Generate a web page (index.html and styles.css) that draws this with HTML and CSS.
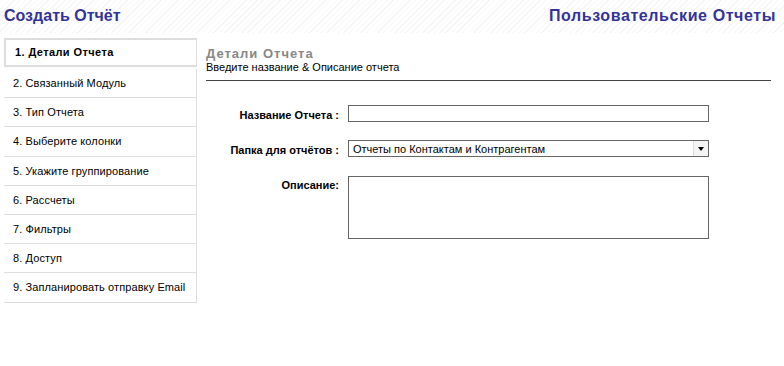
FILE: index.html
```html
<!DOCTYPE html>
<html lang="ru">
<head>
  <meta charset="UTF-8">
  <title>Пользовательские Отчеты</title>
  <link rel="stylesheet" href="styles.css">
</head>
<body>
  <div class="header">
    <h1 class="page-title">Создать Отчёт</h1>
    <h1 class="module-title">Пользовательские Отчеты</h1>
  </div>

  <div class="page">
    <ul class="steps">
      <li class="active">1. Детали Отчета</li>
      <li>2. Связанный Модуль</li>
      <li>3. Тип Отчета</li>
      <li>4. Выберите колонки</li>
      <li>5. Укажите группирование</li>
      <li>6. Рассчеты</li>
      <li>7. Фильтры</li>
      <li>8. Доступ</li>
      <li>9. Запланировать отправку Email</li>
    </ul>

    <div class="main">
      <h2>Детали Отчета</h2>
      <p class="sub">Введите название &amp; Описание отчета</p>

      <div class="form">
        <label for="reportname">Название Отчета :</label>
        <input type="text" id="reportname">

        <label for="folder">Папка для отчётов :</label>
        <div class="select">
          <span>Отчеты по Контактам и Контрагентам</span>
          <span class="arrow"></span>
        </div>

        <label for="descr">Описание:</label>
        <textarea id="descr"></textarea>
      </div>
    </div>
  </div>
</body>
</html>
```

FILE: styles.css
```css
body {
  margin: 0;
  font-family: 'Liberation Sans', Arial, sans-serif;
  font-size: 11px;
  color: #000;
  background: #fff;
}

.header {
  height: 33px;
  display: flex;
  justify-content: space-between;
  align-items: center;
  padding: 0 8px 0 4px;
  background: repeating-linear-gradient(-45deg, #fff 0, #fff 3px, #f5f5f5 3px, #f5f5f5 4px);
}

.header h1 {
  margin: 0 0 1px;
  font-size: 16px;
  font-weight: bold;
  color: #333399;
}

.page-title {
  letter-spacing: 0;
}

.module-title {
  letter-spacing: 0.6px;
}

.page {
  display: flex;
  margin-top: 5px;
}

.steps {
  list-style: none;
  margin: 0 0 0 4px;
  padding: 0;
  width: 193px;
}

.steps li {
  height: 28.2px;
  line-height: 28px;
  padding-left: 9px;
  border-right: 1px solid #ddd;
  border-bottom: 1px solid #ddd;
  letter-spacing: 0.1px;
}

.steps li.active {
  height: 25px;
  line-height: 25px;
  padding-left: 9px;
  border: 2px solid #ddd;
  border-right-width: 1px;
  font-weight: bold;
  letter-spacing: 0.4px;
  margin-bottom: 2px;
}

.main {
  flex: 1;
  margin: 0 13px 0 9px;
  padding-top: 8px;
}

.main h2 {
  margin: 0;
  font-size: 13px;
  color: #888;
  letter-spacing: 1px;
}

.sub {
  margin: 0;
  padding-bottom: 7px;
  border-bottom: 1px solid #444;
}

.form {
  display: grid;
  grid-template-columns: 133px 361px;
  column-gap: 9px;
  row-gap: 18px;
  margin-top: 24px;
}

.form label {
  text-align: right;
  font-weight: bold;
  padding-top: 4px;
}

.form input,
.form textarea,
.select {
  box-sizing: border-box;
  width: 361px;
  margin: 0;
  border: 1px solid #666;
  font: inherit;
}

.form input {
  height: 17px;
}

.form textarea {
  height: 63px;
  margin-top: 1px;
  resize: none;
}

.select {
  height: 17px;
  display: flex;
  justify-content: space-between;
  align-items: center;
  padding-left: 4px;
}

.arrow {
  width: 14px;
  height: 15px;
  background: #f4f4f4;
  border-left: 1px solid #ddd;
  position: relative;
}

.arrow::after {
  content: '';
  position: absolute;
  left: 4px;
  top: 6px;
  border-left: 3px solid transparent;
  border-right: 3px solid transparent;
  border-top: 4px solid #000;
}
```
